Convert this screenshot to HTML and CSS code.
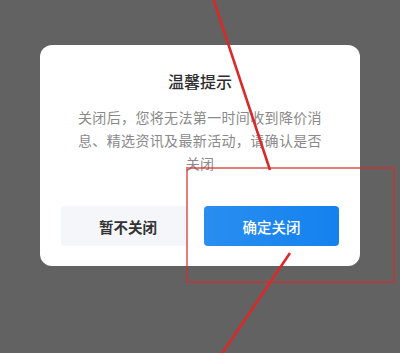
FILE: index.html
```html
<!DOCTYPE html>
<html lang="zh">
<head>
<meta charset="utf-8">
<link rel="stylesheet" href="styles.css">
</head>
<body>
<div class="dialog">
  <div class="title">温馨提示</div>
  <div class="msg">关闭后，您将无法第一时间收到降价消息、精选资讯及最新活动，请确认是否关闭</div>
  <div class="actions">
    <div class="btn btn-cancel">暂不关闭</div>
    <div class="btn btn-ok">确定关闭</div>
  </div>
</div>
<svg class="marks" width="400" height="353" viewBox="0 0 400 353">
  <line x1="213" y1="-2" x2="270" y2="170" stroke="#d92a2a" stroke-width="2.6"/>
  <rect x="187" y="168" width="207" height="114" fill="none" stroke="rgba(215,45,45,0.62)" stroke-width="2"/>
  <line x1="290" y1="253" x2="221" y2="355" stroke="#d92a2a" stroke-width="2.6"/>
</svg>
</body>
</html>
```
FILE: styles.css
```css
html, body {
  margin: 0;
  padding: 0;
}
body {
  width: 400px;
  height: 353px;
  background: #626262;
  overflow: hidden;
  position: relative;
  font-family: "Noto Sans CJK SC", "Noto Sans", sans-serif;
}
.dialog {
  position: relative;
  margin: 45px 0 0 40px;
  width: 320px;
  height: 221px;
  box-sizing: border-box;
  background: #fff;
  border-radius: 12px;
  padding: 24px 21px 20px;
  display: flex;
  flex-direction: column;
}
.title {
  text-align: center;
  font-size: 16px;
  line-height: 24px;
  font-weight: 500;
  color: #2e2e2e;
}
.msg {
  margin: 13px auto 0;
  width: 250px;
  text-align: center;
  font-size: 14px;
  letter-spacing: 0.35px;
  line-height: 23px;
  color: #8a8a8a;
}
.actions {
  margin-top: auto;
  display: grid;
  grid-template-columns: 126px 135px;
  column-gap: 17px;
}
.btn {
  height: 40px;
  border-radius: 4px;
  display: flex;
  align-items: center;
  justify-content: center;
  font-size: 14.5px;
  font-weight: 700;
}
.btn-cancel {
  background: #f5f6f9;
  color: #333;
  padding-left: 8px;
}
.btn-ok {
  background: linear-gradient(90deg, #2a8ef0, #1381ee);
  color: #fff;
  font-weight: 500;
}
.marks {
  position: absolute;
  left: 0;
  top: 0;
}
```
